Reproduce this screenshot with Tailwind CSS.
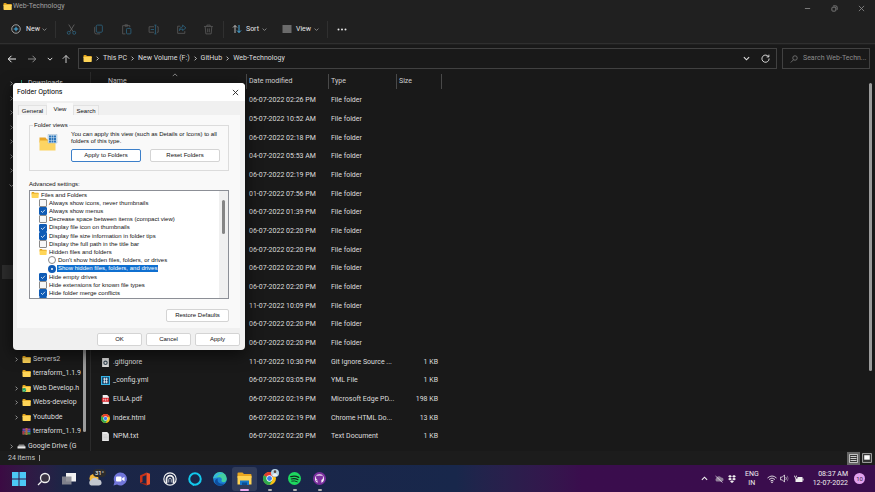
<!DOCTYPE html>
<html lang="en">
<head>
    <meta charset="UTF-8">
    <meta name="viewport" content="width=device-width, initial-scale=1.0">
    <title>Web-Technology</title>
    <script src="https://cdn.jsdelivr.net/npm/@tailwindcss/browser@4"></script>
</head>
<body class="relative flex h-screen flex-col overflow-hidden bg-[#191919] font-['Roboto',sans-serif] text-[7px] leading-[9px] text-[#dedede]">

    <!-- shared icons -->
    <svg class="hidden">
        <symbol id="folder" viewBox="0 0 18 14">
            <path d="M1 1.500Q1 0 2.500 0H6l2 2h8.500Q17.500 2 17.500 3.500V6H1z" fill="#e0a11b"/>
            <path d="M1 3.500h16.500v9Q17.500 14 16 14H2.500Q1 14 1 12.500z" fill="#ffd557"/>
        </symbol>
        <symbol id="right" viewBox="0 0 8 8"><path d="M2.500 1l3 3-3 3" fill="none" stroke="currentColor" stroke-width="1.300"/></symbol>
        <symbol id="down" viewBox="0 0 8 8"><path d="M1 2.500l3 3 3-3" fill="none" stroke="currentColor" stroke-width="1.300"/></symbol>
        <symbol id="chrome" viewBox="0 0 24 24">
            <circle cx="12" cy="12" r="12" fill="#fbc116"/>
            <path d="M12 12L1.600 6A12 12 0 0 1 22.400 6z" fill="#e33b2e"/>
            <path d="M1.600 6A12 12 0 0 0 12 24l5.200-9L12 12z" fill="#2da94f"/>
            <circle cx="12" cy="12" r="5.800" fill="#fff"/>
            <circle cx="12" cy="12" r="4.500" fill="#3b7ded"/>
        </symbol>
        <symbol id="archive" viewBox="0 0 18 14">
            <path d="M1 1h16v4H1z" fill="#8a3fa8"/><path d="M1 5h16v4H1z" fill="#3a6fd0"/><path d="M1 9h16v4H1z" fill="#3f9a4a"/>
            <path d="M7 0h4v14H7z" fill="#b5653a"/><path d="M1 6h4v7H1z" fill="#b03048"/>
        </symbol>
        <symbol id="synced" viewBox="0 0 18 14">
            <use href="#folder" width="18" height="14"/>
            <circle cx="4.500" cy="10" r="4" fill="#17a05d"/><path d="M2.500 10l1.500 1.500L6.500 9" fill="none" stroke="#fff"/>
        </symbol>
        <symbol id="drive" viewBox="0 0 18 14"><path d="M4 3h10l3 5H1z" fill="#8b8b8b"/><path d="M1 7h16v4H1z" fill="#e8e8e8"/></symbol>
        <symbol id="download" viewBox="0 0 18 14"><path d="M9 0v10M4.500 6L9 10.500 13.500 6M3 13h12" fill="none" stroke="#2ea583" stroke-width="1.800"/></symbol>
        <symbol id="config" viewBox="0 0 16 16">
            <path d="M0 0h16v16H0z" fill="#35b3e6"/><path d="M2 2h12v12H2z" fill="#123d63"/>
            <path d="M6 3v10M10 3v10M4 5.500h8M4 10.500h8" stroke="#fff" stroke-width="1.400"/>
        </symbol>
        <symbol id="git" viewBox="0 0 16 16">
            <path d="M2 0h12v16H2z" fill="#dcdcdc"/><circle cx="8" cy="8.500" r="3" fill="none" stroke="#3a4a55" stroke-width="2"/>
        </symbol>
        <symbol id="pdf" viewBox="0 0 16 16">
            <path d="M3 0h8l3 3v13H3z" fill="#eee"/><path d="M1.500 5h13v7h-13z" fill="#d91f26"/>
            <path d="M4 7v3M4 7h1.500v1.500H4M7.500 7v3h1V7zM11 10V7h1.800M11 8.500h1.500" fill="none" stroke="#fff" stroke-width=".8"/>
        </symbol>
        <symbol id="text" viewBox="0 0 16 16"><path d="M2 0h9l3 3v13H2z" fill="#e8e8e8"/><path d="M4 5h7M4 7.500h8M4 10h8M4 12.500h8" stroke="#a8a8a8" stroke-width=".8"/></symbol>
        <symbol id="code" viewBox="0 0 16 16"><path d="M0 0h16v16H0z" fill="#2a9fd8"/></symbol>
    </svg>

    <!-- title bar -->
    <header class="flex h-4 shrink-0 items-center bg-[#202020] pl-[3px] text-[#a0a0a0]">
        <svg class="-mt-[3px] h-[7px] w-[9px]"><use href="#folder"/></svg>
        <h1 class="ml-px -mt-[3px]">Web-Technology</h1>
        <div class="ml-auto flex text-[#858585]">
            <button aria-label="Minimize" class="flex w-[27px] justify-center"><svg class="size-[7px]" viewBox="0 0 8 8"><path d="M1 4h6" stroke="currentColor"/></svg></button>
            <button aria-label="Restore" class="flex w-[27px] justify-center"><svg class="size-[7px]" viewBox="0 0 8 8" fill="none" stroke="currentColor"><rect x="1" y="2.500" width="4.500" height="4.500" rx="1"/><path d="M2.500 1h3Q7 1 7 2.500v3"/></svg></button>
            <button aria-label="Close" class="flex w-[27px] justify-center"><svg class="size-[7px]" viewBox="0 0 8 8"><path d="M1 1l6 6M7 1L1 7" stroke="currentColor"/></svg></button>
        </div>
    </header>

    <!-- command bar -->
    <div class="flex h-7 shrink-0 items-center border-b border-[#2f2f2f] bg-[#202020] pb-px pl-[11px] text-[#e6e6e6]">
        <button class="flex items-center">
            <svg class="size-[10px]" viewBox="0 0 20 20" fill="none"><circle cx="10" cy="10" r="8.500" stroke="#c9c9c9" stroke-width="1.500"/><path d="M10 5.500v9M5.500 10h9" stroke="#4cc2ff" stroke-width="1.800"/></svg>
            <span class="ml-[5px]">New</span>
            <svg class="ml-[2px] size-[5px] text-[#9a9a9a]"><use href="#down"/></svg>
        </button>
        <span class="ml-[8px] h-[17px] w-px bg-[#303030]"></span>
        <div class="flex pl-[2px] text-[#5a5a5a]">
            <button aria-label="Cut" class="flex w-[27px] justify-center"><svg class="size-[11px]" viewBox="0 0 20 20" fill="none" stroke-width="1.500"><path d="M5 1l8 13M15 1L7 14" stroke="#666"/><circle cx="5" cy="16" r="2.700" stroke="#2d6480"/><circle cx="15" cy="16" r="2.700" stroke="#2d6480"/></svg></button>
            <button aria-label="Copy" class="flex w-[28px] justify-center"><svg class="size-[11px]" viewBox="0 0 20 20" fill="none" stroke-width="1.500"><rect x="6" y="2" width="11" height="13" rx="2" stroke="#2d6480"/><path d="M4 5Q3 5 3 7v8q0 3 3 3h7" stroke="currentColor"/></svg></button>
            <button aria-label="Paste" class="flex w-[27px] justify-center"><svg class="size-[11px]" viewBox="0 0 20 20" fill="none" stroke-width="1.500"><path d="M8 18H3V3h13v3M7 3V1.500h5V4H7" stroke="currentColor"/><rect x="10" y="8" width="8" height="10" rx="1.500" stroke="#2d6480"/></svg></button>
            <button aria-label="Rename" class="flex w-[28px] justify-center"><svg class="size-[11px]" viewBox="0 0 20 20" fill="none" stroke-width="1.500"><path d="M11 5H2v10h9M16 5h2.500v10H16" stroke="currentColor"/><path d="M5 10h6M13.500 2v16M11.500 2h4M11.500 18h4" stroke="#2d6480"/></svg></button>
            <button aria-label="Share" class="flex w-[27px] justify-center"><svg class="size-[11px]" viewBox="0 0 20 20" fill="none" stroke-width="1.500"><path d="M8 4H3v13h13v-4" stroke="currentColor"/><path d="M12 2l6 5-6 5V9Q8 9 6 12q0-6 6-7z" stroke="#2d6480"/></svg></button>
            <button aria-label="Delete" class="flex w-[28px] justify-center"><svg class="size-[11px]" viewBox="0 0 20 20" fill="none" stroke="currentColor" stroke-width="1.500"><path d="M2 4.500h16M7 4V2h6v2M4 5l1.200 13h9.600L16 5M8.500 8v7M11.500 8v7"/></svg></button>
        </div>
        <span class="h-[17px] w-px bg-[#303030]"></span>
        <button class="ml-[8px] flex items-center">
            <svg class="size-[10px]" viewBox="0 0 20 20" fill="none" stroke-width="1.700"><path d="M6 18V3M2 7l4-4 4 4" stroke="#d0d0d0"/><path d="M14 2v15M10 13l4 4 4-4" stroke="#4cc2ff"/></svg>
            <span class="ml-[4px]">Sort</span>
            <svg class="ml-[3px] size-[5px] text-[#9a9a9a]"><use href="#down"/></svg>
        </button>
        <button class="ml-[15px] flex items-center">
            <svg class="size-[10px]" viewBox="0 0 20 20"><path d="M1 4h18M1 8h18M1 12h18M1 16h18" stroke="#b5b5b5" stroke-width="2"/></svg>
            <span class="ml-[4px]">View</span>
            <svg class="ml-[3px] size-[5px] text-[#9a9a9a]"><use href="#down"/></svg>
        </button>
        <span class="ml-[8px] h-[17px] w-px bg-[#303030]"></span>
        <button aria-label="See more" class="ml-[9px]"><svg class="h-[3px] w-[10px]" viewBox="0 0 20 6" fill="#e6e6e6"><circle cx="3" cy="3" r="2"/><circle cx="10" cy="3" r="2"/><circle cx="17" cy="3" r="2"/></svg></button>
    </div>

    <!-- navigation bar -->
    <div class="flex h-7 shrink-0 items-center border-t border-[#1f1f1f] pr-[5px] pl-[7px]">
        <nav class="flex w-[71px] items-center">
            <button aria-label="Back" class="mr-[10px]"><svg class="size-[10px]" viewBox="0 0 20 20" fill="none" stroke="#f0f0f0" stroke-width="2"><path d="M18 10H3M9 3.500L2.500 10 9 16.500"/></svg></button>
            <button aria-label="Forward" class="mr-[10px]"><svg class="size-[10px]" viewBox="0 0 20 20" fill="none" stroke="#9c9c9c" stroke-width="1.700"><path d="M2 10h15M11 3.500l6.500 6.500-6.500 6.500"/></svg></button>
            <button aria-label="Recent locations" class="mr-[8px]"><svg class="size-[6px] text-[#e0e0e0]"><use href="#down"/></svg></button>
            <button aria-label="Up"><svg class="size-[10px]" viewBox="0 0 20 20" fill="none" stroke="#e8e8e8" stroke-width="1.700"><path d="M10 18V3M3.500 9.500L10 3l6.500 6.500"/></svg></button>
        </nav>
        <div class="flex h-[21px] flex-1 items-center border border-[#414141] pr-[6px] pl-[4px]">
            <svg class="h-[7px] w-[9px]"><use href="#folder"/></svg>
            <svg class="mx-[3px] size-[5px]"><use href="#right"/></svg>
            <a href="#">This PC</a>
            <svg class="mx-[3px] size-[5px]"><use href="#right"/></svg>
            <a href="#">New Volume (F:)</a>
            <svg class="mx-[3px] size-[5px]"><use href="#right"/></svg>
            <a href="#">GitHub</a>
            <svg class="mx-[3px] size-[5px]"><use href="#right"/></svg>
            <a href="#">Web-Technology</a>
            <button aria-label="Previous locations" class="mr-[11px] ml-auto"><svg class="size-[7px]"><use href="#down"/></svg></button>
            <button aria-label="Refresh"><svg class="size-[9px]" viewBox="0 0 20 20" fill="none" stroke="#e8e8e8" stroke-width="2"><path d="M17 6.500A8 8 0 1 0 18 10M17.500 1.500v5h-5"/></svg></button>
        </div>
        <label class="ml-[5px] flex h-[21px] w-[88px] items-center border border-[#414141] pl-[7px]">
            <svg class="size-[8px] shrink-0" viewBox="0 0 16 16" fill="none" stroke="#8a8a8a" stroke-width="1.400"><circle cx="10" cy="6" r="4.500"/><path d="M7 9.500L1.500 15"/></svg>
            <input type="text" aria-label="Search Web-Technology" placeholder="Search Web-Techn..." class="ml-[5px] w-full min-w-0 bg-transparent outline-none placeholder:text-[#8c8c8c]">
        </label>
    </div>

    <!-- content -->
    <div class="flex min-h-0 flex-1">
        <aside class="relative w-[91px] shrink-0 overflow-hidden border-r border-[#2b2b2b] pt-[4px]">
            <ul id="tree"></ul>
            <span class="absolute bottom-[19px] left-[83px] h-[100px] w-[3px] rounded-full bg-[#9b9b9b]"></span>
        </aside>
        <main class="min-w-0 flex-1 overflow-hidden">
            <table class="w-[351px] table-fixed">
                <thead>
                    <tr class="h-[19px] text-left text-[#d0d0d0]">
                        <th class="relative w-[155px] pl-[17px] font-normal">Name
                            <svg class="absolute top-0 left-[81px] size-[6px] rotate-180 text-[#8a8a8a]"><use href="#down"/></svg>
                        </th>
                        <th class="w-[82px] font-normal"><div class="border-l border-[#494949] py-[3px] pl-[2px]">Date modified</div></th>
                        <th class="w-[68px] font-normal"><div class="border-l border-[#494949] py-[3px] pl-[2px]">Type</div></th>
                        <th class="w-[46px] font-normal"><div class="border-x border-[#494949] py-[3px] pl-[2px]">Size</div></th>
                    </tr>
                </thead>
                <tbody id="files"></tbody>
            </table>
        </main>
        <div class="w-[6px] pt-[11px] pb-[80px]"><div class="h-full w-[3px] rounded-full bg-[#9b9b9b]"></div></div>
    </div>

    <!-- status bar -->
    <footer class="flex h-[14px] shrink-0 items-center bg-[#1c1c1c] pr-[3px] pl-2 text-[#c8c8c8]">
        <span>24 items</span>
        <span class="ml-[4px] h-[6px] w-px bg-[#9a9a9a]"></span>
        <button aria-label="Details" class="ml-auto bg-[#666] p-[2px]"><svg class="size-[9px]" viewBox="0 0 18 18"><path d="M1 1h16v16H1z" fill="#333" stroke="#e8e8e8" stroke-width="1.500"/><path d="M3 5h12M3 9h12M3 13h12" stroke="#e8e8e8" stroke-width="1.700"/></svg></button>
        <button aria-label="Large thumbnails" class="ml-[2px]"><svg class="size-[10px]" viewBox="0 0 18 18"><path d="M1 1h16v16H1z" fill="#333" stroke="#bbb" stroke-width="1.500"/><path d="M4 4h10v8H4z" fill="#fff"/></svg></button>
    </footer>

    <!-- taskbar -->
    <div class="flex h-[27px] shrink-0 items-center">
        <div class="flex h-full flex-1 items-center bg-linear-to-r from-[#3b0a43] from-0% via-[#1b2546] via-14% to-[#18274b] pl-[6px]">
            <button aria-label="Start" class="flex w-[25px] justify-center"><svg class="size-[14px]" viewBox="0 0 28 28" fill="#4cc8f5"><path d="M0 0h13v13H0zM15 0h13v13H15zM0 15h13v13H0zM15 15h13v13H15z"/></svg></button>
            <button aria-label="Search" class="flex w-[25px] justify-center"><svg class="size-[14px]" viewBox="0 0 28 28" fill="#3a3342" stroke="#f0f0f0" stroke-width="2.600"><circle cx="16" cy="12" r="9"/><path d="M9.500 18.500L2 26"/></svg></button>
            <button aria-label="Task view" class="flex w-[26px] justify-center"><svg class="size-[14px]" viewBox="0 0 28 28"><path d="M8 2h20v17H8z" fill="#f2f2f2"/><path d="M0 9h19v16H0z" fill="#8b8c93" fill-opacity=".9"/></svg></button>
            <button aria-label="Weather" class="relative flex w-[25px] justify-center">
                <svg class="size-[14px]" viewBox="0 0 28 28"><circle cx="12" cy="13" r="9" fill="#f5b93a"/><path d="M6 27a6 6 0 0 1 0-11 8 8 0 0 1 14-1 6 6 0 0 1 2 12z" fill="#c3c8d0"/></svg>
                <span class="absolute -top-[3px] left-[11px] rounded-full bg-[#2c2c2c] px-[2px] text-[6px] leading-[8px] text-white">31°</span>
            </button>
            <button aria-label="Chat" class="flex w-[25px] justify-center"><svg class="size-[14px]" viewBox="0 0 28 28"><path d="M14 1a13 13 0 1 1-6 24l-7 2 2-7A13 13 0 0 1 14 1z" fill="#7176d9"/><rect x="6" y="9" width="11" height="10" rx="2" fill="#fff"/><path d="M18 13l5-3.500v9L18 15z" fill="#fff"/></svg></button>
            <button aria-label="Office" class="flex w-[25px] justify-center"><svg class="size-[14px]" viewBox="0 0 28 28"><path d="M4 7L17 1v5L9 9v11l-5 2z" fill="#c8321a"/><path d="M17 1l7 2.500v21L17 27z" fill="#f0502a"/><path d="M4 22l13 1v4z" fill="#a82414"/></svg></button>
            <button aria-label="Arch" class="flex w-[25px] justify-center"><svg class="size-[14px]" viewBox="0 0 28 28" fill="none" stroke="#f2f2f2"><circle cx="14" cy="14" r="12.300" stroke-width="2.400"/><path d="M7 23V14a7 7 0 0 1 14 0v9" stroke-width="3.500"/><path d="M11.500 21v-6a2.500 2.500 0 0 1 5 0v6" stroke-width="1.500"/></svg></button>
            <button aria-label="Alexa" class="flex w-[25px] justify-center"><svg class="size-[14px]" viewBox="0 0 28 28" fill="none" stroke="#13c8ec"><circle cx="14" cy="14" r="11.500" stroke-width="4"/><path d="M10 25l1 3" stroke-width="2"/></svg></button>
            <button aria-label="Edge" class="flex w-[25px] justify-center"><svg class="size-[14px]" viewBox="0 0 28 28"><circle cx="14" cy="14" r="13.500" fill="#1b7fd4"/><path d="M.5 13A13.500 13.500 0 0 1 27.500 14c0 5-4 7-8 6-3-1-3-2-2-4 1-4-3-6-7-5-5 0-8 1-10 2z" fill="#43cfa0"/><path d="M.5 13C2 3 14-1 21 3c-7 0-12 4-14 8-3 0-5 1-6.500 2z" fill="#35b4e3"/><path d="M10 13c-3 6 2 12 13 10-5 6-14 6-18 0-3-5 0-9 5-10z" fill="#0f4fa0"/></svg></button>
            <button aria-label="File Explorer" class="relative flex h-[24px] w-[25px] items-center justify-center rounded-[3px] bg-white/10">
                <svg class="h-[13px] w-[15px]" viewBox="0 0 30 26"><path d="M1 3q0-2 2-2h8l3 3h13q2 0 2 2v6H1z" fill="#e8a520"/><path d="M1 8h28v17H1z" fill="#ffd253"/><path d="M6 17h18v9H6z" fill="#1677c9"/><path d="M10 21h10v5H10z" fill="#0b4d91"/></svg>
                <span class="absolute bottom-0 h-[2px] w-[9px] rounded-full bg-[#eaa9ef]"></span>
            </button>
            <button aria-label="Chrome" class="relative flex h-[24px] w-[25px] items-center justify-center">
                <svg class="size-[13px]"><use href="#chrome"/></svg>
                <svg class="absolute top-[2px] right-[3px] size-[8px]" viewBox="0 0 18 18"><circle cx="9" cy="9" r="9" fill="#b8d4e3"/><circle cx="9" cy="6" r="3" fill="#5a4640"/><path d="M4 16q0-6 5-6t5 6z" fill="#f2f2f2"/></svg>
                <span class="absolute bottom-0 h-[2px] w-[4px] rounded-full bg-[#b0b0b0]"></span>
            </button>
            <button aria-label="Spotify" class="relative flex h-[24px] w-[25px] items-center justify-center">
                <svg class="size-[13px]" viewBox="0 0 28 28" fill="none" stroke="#10271b" stroke-linecap="round"><circle cx="14" cy="14" r="14" fill="#1ed760" stroke="none"/><path d="M6 10q9-3 17 1.500" stroke-width="2.800"/><path d="M7 15q8-2 14.500 1.500" stroke-width="2.300"/><path d="M8 19.500q6-1.500 12 1.500" stroke-width="1.900"/></svg>
                <span class="absolute bottom-0 h-[2px] w-[4px] rounded-full bg-[#b0b0b0]"></span>
            </button>
            <button aria-label="GitHub Desktop" class="relative flex h-[24px] w-[25px] items-center justify-center">
                <svg class="size-[13px]" viewBox="0 0 28 28"><circle cx="14" cy="14" r="14" fill="#7b2f9e"/><path d="M14 5a9.500 9.500 0 0 0-4 18.200V20q-3 .5-4-2 2 0 4 .5V17q-4-1-3.500-5L7 7l3 1q4-1 8 0l3-1 .5 5q.5 4-3.500 5v6.200A9.500 9.500 0 0 0 14 5z" fill="#f4eff6"/><path d="M10 11.500q4-1 8 0 2 4-4 4.500-6-.5-4-4.500z" fill="#7b2f9e"/></svg>
                <span class="absolute bottom-0 h-[2px] w-[4px] rounded-full bg-[#b0b0b0]"></span>
            </button>
        </div>
        <div class="flex h-full w-[419px] items-center justify-end bg-linear-to-r from-[#18274b] to-[#3a0d4d] to-30% pr-[10px] text-[#f0f0f0]">
            <button aria-label="Show hidden icons" class="mr-[6px]"><svg class="size-[7px] rotate-180"><use href="#down"/></svg></button>
            <svg class="mr-[4px] h-[8px] w-[10px]" viewBox="0 0 20 16"><path d="M5 13a4 4 0 0 1 0-7 5 5 0 0 1 9-1 4 4 0 0 1 2 8z" fill="#8f7f98"/><path d="M3 2l14 13" stroke="#e8e0ec" stroke-width="1.500"/></svg>
            <svg class="mr-[9px] h-[8px] w-[8px]" viewBox="0 0 16 16" fill="#f0f0f0"><path d="M4 0l4 2.700L4 5.300 0 2.700zM12 0l4 2.700-4 2.600-4-2.600zM4 5.500l4 2.700-4 2.600L0 8.200zM12 5.500l4 2.700-4 2.600-4-2.600zM8 10.500l4 2.600L8 16l-4-2.900z"/></svg>
            <button class="mr-[8px] text-center">ENG<br>IN</button>
            <svg class="mr-[3px] size-[10px]" viewBox="0 0 20 20" fill="none" stroke="#f0f0f0" stroke-width="1.700"><path d="M1 8q9-8 18 0M4 11q6-6 12 0M7 14q3-3 6 0"/><circle cx="10" cy="16.500" r="1"/></svg>
            <svg class="mr-[5px] size-[9px]" viewBox="0 0 20 20" fill="none" stroke="#f0f0f0" stroke-width="1.700"><path d="M1 7h4l5-5v16l-5-5H1zM13 7q2 3 0 6"/><path d="M16 4q4 6 0 12" stroke="#8f7f98"/></svg>
            <svg class="mr-[9px] h-[8px] w-[10px]" viewBox="0 0 20 16"><path d="M3 4h14v10H3z" fill="#f0f0f0"/><path d="M17 7h2v4h-2z" fill="#f0f0f0"/><path d="M0 1h7v6H0z" fill="#3a0d4d"/><path d="M1 1v3h4V1M3 4v4" stroke="#f0f0f0" stroke-width="1.300" fill="none"/></svg>
            <div class="mr-[6px] text-right">08:37 AM<br>12-07-2022</div>
            <span class="flex size-[11px] items-center justify-center rounded-full bg-[#e3a2ee] text-[6px] text-[#3a1d40]">10</span>
        </div>
    </div>

    <!-- folder options dialog -->
    <div role="dialog" aria-label="Folder Options" class="absolute top-[83px] left-[13px] w-[232px] overflow-hidden rounded-[4px] bg-[#f0f0f0] font-['Liberation_Sans',sans-serif] text-[6px] leading-[7px] text-[#111] shadow-[0_4px_16px_rgba(0,0,0,0.6)]">
        <div class="flex h-[18px] items-center justify-between bg-white pr-[6px] pl-[4px] font-['Roboto',sans-serif] text-[7px] text-black">
            <h2>Folder Options</h2>
            <button aria-label="Close dialog"><svg class="size-[7px]" viewBox="0 0 8 8"><path d="M1 1l6 6M7 1L1 7" stroke="#222"/></svg></button>
        </div>
        <div class="px-1 pt-[2px] pb-1">
            <div role="tablist" class="flex h-[12px] items-end pl-px">
                <button role="tab" class="h-[10px] w-[29px] border border-b-0 border-[#e2e2e2] bg-[#f3f3f3] pt-px">General</button>
                <button role="tab" aria-selected="true" class="h-[12px] w-[26px] bg-[#f9f9f9] pt-px">View</button>
                <button role="tab" class="h-[10px] w-[26px] border border-b-0 border-[#e2e2e2] bg-[#f3f3f3] pt-px">Search</button>
            </div>
            <div class="mr-px bg-[#f9f9f9] pt-[7px] pr-[11px] pb-[6px] pl-[12px]">
                <fieldset class="border border-[#dcdcdc] pb-[8px] pl-[9px]">
                    <legend class="-ml-[6px] px-px">Folder views</legend>
                    <div class="flex gap-[13px]">
                        <svg class="mt-[5px] h-[17px] w-[19px] shrink-0" viewBox="0 0 38 34">
                            <path d="M1 7h12l3 4h17v6H1z" fill="#e8a628"/><path d="M1 13h32v20H1z" fill="#fcd462"/>
                            <path d="M18 1h18v17H18z" fill="#d3e4f3" stroke="#9fb8cf"/>
                            <path d="M20 3h4v4h-4zM25 3h4v4h-4zM30 3h4v4h-4zM20 8h4v4h-4zM25 8h4v4h-4zM30 8h4v4h-4zM20 13h4v4h-4zM25 13h4v4h-4zM30 13h4v4h-4z" fill="#2c75b8"/>
                        </svg>
                        <div class="pt-[2px]">
                            <p>You can apply this view (such as Details or Icons) to all<br>folders of this type.</p>
                            <div class="mt-[4px] flex gap-[9px]">
                                <button class="h-[13px] w-[70px] rounded-[2px] border border-[#3c7fc9] bg-white">Apply to Folders</button>
                                <button class="h-[13px] w-[70px] rounded-[2px] border border-[#d4d4d4] bg-white">Reset Folders</button>
                            </div>
                        </div>
                    </div>
                </fieldset>
                <h3 class="mt-[10px]">Advanced settings:</h3>
                <div class="mt-[2px] flex h-[109px] overflow-hidden border border-[#8c8f96] bg-white">
                    <ul id="settings" class="flex-1 pl-px"></ul>
                    <div class="flex w-[9px] justify-center bg-[#f0f0f0] pt-[9px]"><span class="h-[34px] w-[3px] rounded-full bg-[#858585]"></span></div>
                </div>
                <button class="mt-[10px] ml-auto block h-[13px] w-[63px] rounded-[2px] border border-[#d4d4d4] bg-white">Restore Defaults</button>
            </div>
            <div class="mt-[5px] flex justify-end gap-[4px] pr-px">
                <button class="h-[13px] w-[45px] rounded-[2px] border border-[#d4d4d4] bg-white">OK</button>
                <button class="h-[13px] w-[45px] rounded-[2px] border border-[#d4d4d4] bg-white">Cancel</button>
                <button class="h-[13px] w-[45px] rounded-[2px] border border-[#d4d4d4] bg-white">Apply</button>
            </div>
        </div>
    </div>

    <script>

        // [icon, name, date, type, size]
        const files = [
            ['folder', '', '06-07-2022 02:26 PM', 'File folder', ''],
            ['folder', '', '05-07-2022 10:52 AM', 'File folder', ''],
            ['folder', '', '06-07-2022 02:18 PM', 'File folder', ''],
            ['folder', '', '04-07-2022 05:53 AM', 'File folder', ''],
            ['folder', '', '06-07-2022 02:19 PM', 'File folder', ''],
            ['folder', '', '01-07-2022 07:56 PM', 'File folder', ''],
            ['folder', '', '06-07-2022 01:39 PM', 'File folder', ''],
            ['folder', '', '06-07-2022 02:20 PM', 'File folder', ''],
            ['folder', '', '06-07-2022 02:20 PM', 'File folder', ''],
            ['folder', '', '06-07-2022 02:20 PM', 'File folder', ''],
            ['folder', '', '06-07-2022 02:20 PM', 'File folder', ''],
            ['folder', '', '11-07-2022 10:09 PM', 'File folder', ''],
            ['folder', '', '06-07-2022 02:20 PM', 'File folder', ''],
            ['folder', '', '06-07-2022 02:20 PM', 'File folder', ''],
            ['git', '.gitignore', '11-07-2022 10:30 PM', 'Git Ignore Source ...', '1 KB'],
            ['config', '_config.yml', '06-07-2022 03:05 PM', 'YML File', '1 KB'],
            ['pdf', 'EULA.pdf', '06-07-2022 02:19 PM', 'Microsoft Edge PD...', '198 KB'],
            ['chrome', 'index.html', '06-07-2022 02:19 PM', 'Chrome HTML Do...', '13 KB'],
            ['text', 'NPM.txt', '06-07-2022 02:20 PM', 'Text Document', '1 KB'],
            ['code', '', '', '', '']
        ];

        document.getElementById('files').innerHTML = files.map(([icon, name, date, type, size]) => `
            <tr class="h-[19px] nth-[3n]:h-[18px]">
                <td class="pl-[10px]"><div class="flex items-center gap-[3px]"><svg class="size-[9px]"><use href="#${icon}"/></svg>${name}</div></td>
                <td class="pl-[3px] whitespace-nowrap">${date}</td>
                <td class="pl-[3px] whitespace-nowrap">${type}</td>
                <td class="pr-[4px] text-right whitespace-nowrap">${size}</td>
            </tr>`).join('');

        // [level, arrow, icon, name]
        const tree = [
            [0, 'right', 'download', 'Downloads'],
            [0, 'right', '', ''], [0, 'right', '', ''], [0, 'right', '', ''],
            [0, 'right', '', ''], [0, 'right', '', ''], [0, 'right', '', ''],
            [0, 'down', '', ''],
            [1, '', '', ''], [1, '', '', ''], [1, '', '', ''], [1, '', '', ''], [1, '', '', ''],
            [1, 'selected', '', ''],
            [1, '', '', ''], [1, '', '', ''], [1, '', '', ''], [1, '', '', ''], [1, '', '', ''],
            [1, 'right', 'folder', 'Servers2'],
            [1, '', 'folder', 'terraform_1.1.9'],
            [1, 'right', 'synced', 'Web Develop.h'],
            [1, 'right', 'folder', 'Webs-develop'],
            [1, 'right', 'folder', 'Youtubde'],
            [1, '', 'archive', 'terraform_1.1.9'],
            [0, 'right', 'drive', 'Google Drive (G']
        ];

        document.getElementById('tree').innerHTML = tree.map(([level, arrow, icon, name]) => `
            <li class="ml-[2px] flex h-[14px] items-center whitespace-nowrap odd:h-[15px] ${level ? 'pl-[12px]' : 'pl-[7px]'} ${arrow === 'selected' ? 'bg-[#2d2d2d]' : ''}">
                <svg class="size-[5px] shrink-0 text-[#a8a8a8]"><use href="#${arrow}"/></svg>
                <svg class="mr-[2px] ml-[3px] h-[7px] w-[9px] shrink-0"><use href="#${icon}"/></svg>
                <span>${name}</span>
            </li>`).join('');

        // [kind, label, on]
        const settings = [
            ['group', 'Files and Folders'],
            ['checkbox', 'Always show icons, never thumbnails', false],
            ['checkbox', 'Always show menus', true],
            ['checkbox', 'Decrease space between items (compact view)', false],
            ['checkbox', 'Display file icon on thumbnails', true],
            ['checkbox', 'Display file size information in folder tips', true],
            ['checkbox', 'Display the full path in the title bar', false],
            ['subgroup', 'Hidden files and folders'],
            ['radio', "Don't show hidden files, folders, or drives", false],
            ['radio', 'Show hidden files, folders, and drives', true],
            ['checkbox', 'Hide empty drives', true],
            ['checkbox', 'Hide extensions for known file types', false],
            ['checkbox', 'Hide folder merge conflicts', true],
            ['checkbox', '', true]
        ];

        const row = {
            group: (label) => `<svg class="mr-[2px] h-[6px] w-[8px]"><use href="#folder"/></svg>${label}`,
            subgroup: (label) => `<svg class="mr-[2px] ml-[8px] h-[6px] w-[8px]"><use href="#folder"/></svg>${label}`,
            checkbox: (label, on) => `
                <label class="relative ml-[8px] flex items-center gap-[2px]">
                    <input type="checkbox" ${on ? 'checked' : ''} class="peer size-[8px] appearance-none rounded-[1px] border border-[#8a8a8a] bg-[#f7f7f7] checked:border-[#0f5bb5] checked:bg-[#0f5bb5]">
                    <svg class="absolute left-px hidden size-[6px] peer-checked:block" viewBox="0 0 12 12"><path d="M2 6l3 3 5-5.500" fill="none" stroke="#fff" stroke-width="1.500"/></svg>
                    ${label}
                </label>`,
            radio: (label, on) => `
                <label class="ml-[17px] flex items-center gap-px">
                    <input type="radio" name="hidden-files" ${on ? 'checked' : ''} class="peer size-[8px] appearance-none rounded-full border border-[#8a8a8a] bg-white checked:border-[3px] checked:border-[#0f5bb5]">
                    <span class="px-px peer-checked:bg-[#0f6fd0] peer-checked:text-white">${label}</span>
                </label>`
        };

        document.getElementById('settings').innerHTML = settings.map(([kind, label, on]) => `
            <li class="flex h-[8px] items-center whitespace-nowrap nth-[5n]:h-[9px]">${row[kind](label, on)}</li>`).join('');

    </script>

</body>
</html>
